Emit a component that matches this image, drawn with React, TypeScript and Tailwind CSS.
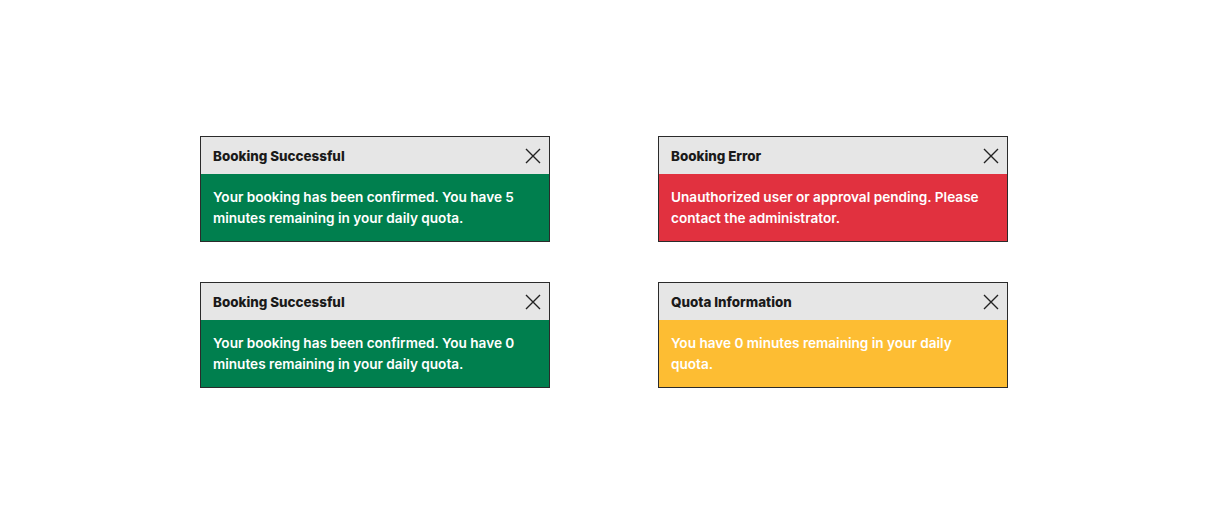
import React from "react";

type Toast = { title: string; body: string; bg: string };

const toasts: Toast[] = [
  { title: "Booking Successful", body: "Your booking has been confirmed. You have 5 minutes remaining in your daily quota.", bg: "bg-[#007f4e]" },
  { title: "Booking Error", body: "Unauthorized user or approval pending. Please contact the administrator.", bg: "bg-[#e1313f]" },
  { title: "Booking Successful", body: "Your booking has been confirmed. You have 0 minutes remaining in your daily quota.", bg: "bg-[#007f4e]" },
  { title: "Quota Information", body: "You have 0 minutes remaining in your daily quota.", bg: "bg-[#fdbd33]" },
];

function Card({ t }: { t: Toast }) {
  return (
    <div className="w-[350px] h-[106px] border border-[#2b2b2b] flex flex-col">
      <div className="h-[37px] bg-[#e6e6e6] flex items-center justify-between pl-3 pr-[8px]">
        <span className="text-[13.4px] font-extrabold text-[#1a1a1a] pt-[2px]">{t.title}</span>
        <svg width="16" height="16" viewBox="0 0 16 16" className="text-[#222]">
          <path d="M1 1 L15 15 M15 1 L1 15" stroke="currentColor" strokeWidth="1.4" fill="none" />
        </svg>
      </div>
      <div className={`flex-1 ${t.bg} px-3 pt-[13px] text-white text-[13.6px] font-semibold leading-[21px]`}>
        {t.body}
      </div>
    </div>
  );
}

export default function App() {
  return (
    <div className="w-full h-[524px] bg-white flex items-center justify-center" style={{ fontFamily: "Inter, 'Liberation Sans', sans-serif" }}>
      <div className="grid grid-cols-[350px_350px] gap-x-[108px] gap-y-[40px]">
        {toasts.map((t, i) => (
          <Card key={i} t={t} />
        ))}
      </div>
    </div>
  );
}
